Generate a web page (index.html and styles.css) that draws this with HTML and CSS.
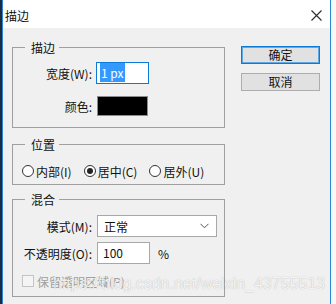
FILE: index.html
```html
<!DOCTYPE html>
<html lang="zh-CN">
<head>
    <meta charset="UTF-8">
    <meta name="viewport" content="width=device-width, initial-scale=1.0">
    <title>描边</title>
    <link rel="stylesheet" href="styles.css">
</head>
<body>
    <div class="desk"></div>
    <div class="window">
        <div class="titlebar">
            <span class="title">描边</span>
            <svg class="close" width="11" height="11" viewBox="0 0 11 11">
                <path d="M0.5 0.5 L10.5 10.5 M10.5 0.5 L0.5 10.5" stroke="#2b2b2b" stroke-width="1.1" fill="none"/>
            </svg>
        </div>
        <div class="client">
            <div class="main">
                <div class="group g-stroke">
                    <div class="legend">描边</div>
                    <div class="row r-width">
                        <span class="label">宽度(W):</span>
                        <div class="field focused"><span class="sel">1 px</span></div>
                    </div>
                    <div class="row r-color">
                        <span class="label">颜色:</span>
                        <div class="swatch"></div>
                    </div>
                </div>
                <div class="group g-pos">
                    <div class="legend">位置</div>
                    <div class="radios">
                        <label class="opt"><input type="radio" name="pos">内部(I)</label>
                        <label class="opt"><input type="radio" name="pos" checked>居中(C)</label>
                        <label class="opt"><input type="radio" name="pos">居外(U)</label>
                    </div>
                </div>
                <div class="group g-blend">
                    <div class="legend">混合</div>
                    <div class="row r-mode">
                        <span class="label">模式(M):</span>
                        <div class="select">
                            <span>正常</span>
                            <svg width="9" height="6" viewBox="0 0 9 6">
                                <path d="M0.5 0.8 L4.5 4.8 L8.5 0.8" stroke="#555" stroke-width="1" fill="none"/>
                            </svg>
                        </div>
                    </div>
                    <div class="row r-opacity">
                        <span class="label">不透明度(O):</span>
                        <div class="field">100</div>
                        <span class="unit">%</span>
                    </div>
                    <label class="check disabled"><input type="checkbox" disabled>保留透明区域(P)</label>
                </div>
            </div>
            <div class="buttons">
                <button class="btn default">确定</button>
                <button class="btn">取消</button>
            </div>
        </div>
        <div class="watermark">https://blog.csdn.net/weixin_43755513</div>
    </div>
    <div class="desk-right"></div>
</body>
</html>
```

FILE: styles.css
```css
body {
    margin: 0;
    display: flex;
    height: 304px;
    overflow: hidden;
    font-family: "Noto Sans CJK SC", "Noto Sans", sans-serif;
    font-size: 12px;
    color: #111;
    background-color: #f4f4f4;
}
.desk {
    width: 2px;
    background-color: #1d2b3d;
}
.desk-right {
    flex: 1;
    background-color: #f7f7f7;
}
.window {
    position: relative;
    width: 327px;
    border-left: 1px solid #2a86d8;
    border-right: 1px solid #2a86d8;
    background-color: #f0f0f0;
}
.titlebar {
    height: 28px;
    box-sizing: border-box;
    padding: 3px 8px 0 2px;
    display: flex;
    align-items: center;
    justify-content: space-between;
    background-color: #fff;
}
.close {
    display: block;
}
.client {
    display: flex;
    align-items: flex-start;
}
.main {
    margin-left: 9px;
    padding-top: 19px;
    width: 213px;
}
.group {
    border: 1px solid #a0a0a0;
}
.legend {
    width: fit-content;
    height: 14px;
    line-height: 14px;
    margin: -7px 0 0 12px;
    padding: 0 4px 0 6px;
    background-color: #f0f0f0;
}
.row {
    display: flex;
    align-items: center;
    height: 22px;
}
.label {
    width: 79px;
    margin-right: 4px;
    text-align: right;
    white-space: nowrap;
}
.field {
    width: 53px;
    height: 22px;
    box-sizing: border-box;
    padding-left: 5px;
    border: 1px solid #a8a8a8;
    background-color: #fff;
    line-height: 20px;
}
.field.focused {
    border-color: #0a7ad6;
    padding-left: 3px;
}
.sel {
    background-color: #3399ff;
    color: #fff;
    padding: 1px 1px;
}
.g-stroke {
    padding-bottom: 10px;
}
.r-width {
    margin-top: 7px;
}
.r-color {
    margin-top: 11px;
}
.swatch {
    width: 51px;
    height: 20px;
    box-sizing: border-box;
    margin-left: 1px;
    border: 1px solid #8c8c8c;
    background-color: #000;
}
.g-pos {
    margin-top: 16px;
    padding-bottom: 5px;
}
.radios {
    display: flex;
    margin-top: 11px;
    padding-left: 9px;
    height: 16px;
    align-items: center;
}
.opt {
    display: flex;
    align-items: center;
    margin-right: 12px;
}
.opt input {
    appearance: none;
    width: 12px;
    height: 12px;
    margin: 0 2px 0 0;
    border: 1px solid #333;
    border-radius: 50%;
    background-color: #fff;
    display: grid;
    place-items: center;
}
.opt input:checked::after {
    content: "";
    width: 6px;
    height: 6px;
    border-radius: 50%;
    background-color: #222;
}
.g-blend {
    margin-top: 14px;
    padding-bottom: 7px;
}
.r-mode {
    margin-top: 8px;
}
.select {
    width: 120px;
    height: 22px;
    box-sizing: border-box;
    margin-left: 1px;
    padding: 0 7px 0 6px;
    border: 1px solid #a8a8a8;
    background-color: #fff;
    display: flex;
    align-items: center;
    justify-content: space-between;
}
.select svg {
    display: block;
}
.r-opacity {
    margin-top: 5px;
}
.r-opacity .field {
    margin-left: 1px;
}
.unit {
    margin-left: 8px;
}
.check {
    display: flex;
    align-items: center;
    height: 16px;
    margin-top: 9px;
    padding-left: 9px;
}
.check input {
    appearance: none;
    width: 12px;
    height: 12px;
    margin: 0 3px 0 0;
    border: 1px solid #c4c4c4;
    background-color: #f4f4f4;
}
.check.disabled {
    color: #a0a0a0;
}
.buttons {
    margin-left: 16px;
    padding-top: 18px;
    display: flex;
    flex-direction: column;
    gap: 9px;
}
.btn {
    width: 79px;
    height: 18px;
    padding: 0;
    font-family: inherit;
    font-size: 12px;
    line-height: 14px;
    color: #111;
    border: 1px solid #adadad;
    background-color: #e1e1e1;
}
.btn.default {
    border-color: #0a7ad6;
    box-shadow: inset 0 0 0 1px #5ea9e8;
}
.watermark {
    position: absolute;
    left: 50px;
    top: 275px;
    font-family: "Liberation Sans", Arial, sans-serif;
    font-size: 16px;
    color: rgba(255, 255, 255, 0.85);
    text-shadow: 0 0 1px rgba(0, 0, 0, 0.3);
    white-space: nowrap;
}
```
